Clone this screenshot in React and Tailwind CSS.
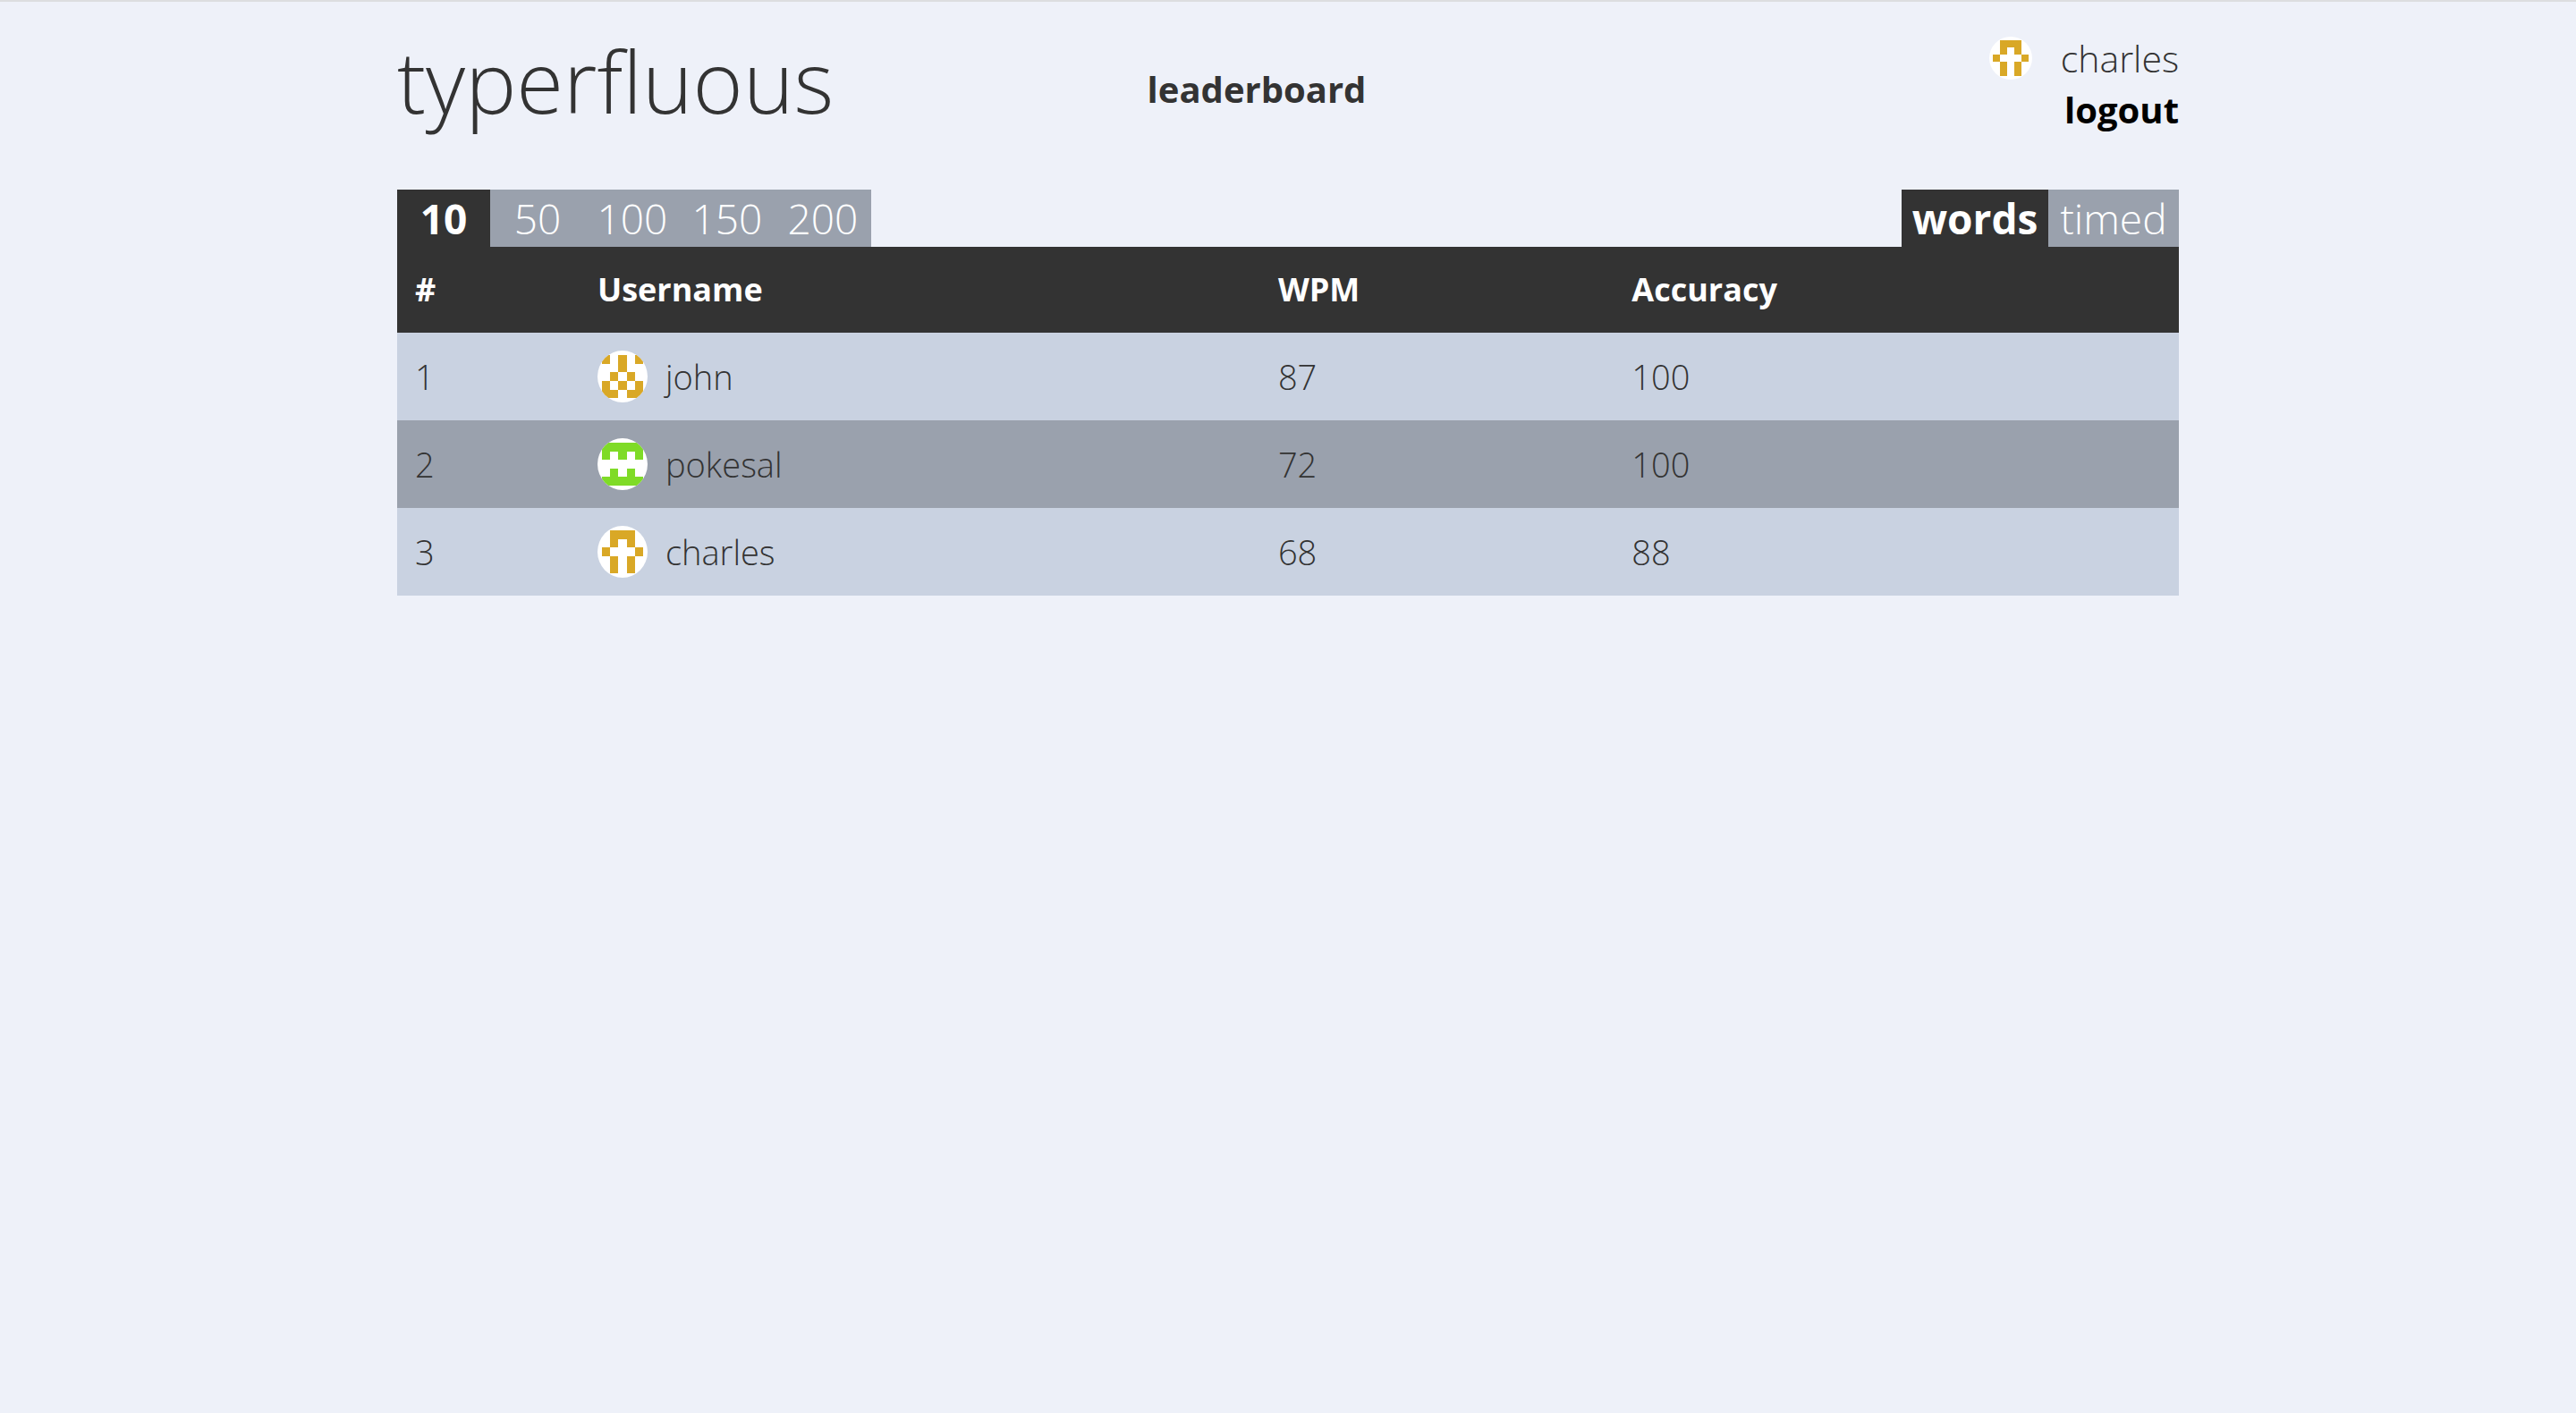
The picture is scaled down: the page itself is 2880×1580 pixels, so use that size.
const GOLD = "#d9a826";
const GREEN = "#7fdb27";

const players = [
  { rank: 1, name: "john", wpm: 87, accuracy: 100, color: GOLD, cells: ["10101", "00100", "01010", "10101", "11011"] },
  { rank: 2, name: "pokesal", wpm: 72, accuracy: 100, color: GREEN, cells: ["11111", "10101", "00000", "01010", "11111"] },
  { rank: 3, name: "charles", wpm: 68, accuracy: 88, color: GOLD, cells: ["01110", "01010", "10001", "01010", "01010"] },
];

function Identicon({ player, className }) {
  return (
    <svg
      viewBox="-5 -5 60 60"
      preserveAspectRatio="none"
      shapeRendering="crispEdges"
      aria-hidden="true"
      className={`shrink-0 rounded-[50%] bg-white ${className}`}
    >
      {player.cells.flatMap((row, y) =>
        [...row].map((cell, x) =>
          cell === "1" ? (
            <rect key={`${x}-${y}`} x={x * 10} y={y * 10} width="10" height="10" fill={player.color} />
          ) : null
        )
      )}
    </svg>
  );
}

function Tab({ active, className, children }) {
  return (
    <button
      type="button"
      aria-pressed={!!active}
      className={`h-16 text-[46px] leading-[64px] text-white ${
        active ? "bg-[#333333] font-bold" : "bg-[#9aa1ad] font-light"
      } ${className}`}
    >
      {children}
    </button>
  );
}

export default function App() {
  const me = players[2];
  return (
    <div className="min-h-screen border-t-2 border-[#dcdde0] bg-[#eef1f9] font-['Open_Sans',sans-serif] text-[#333333] [font-variant-ligatures:none]">
      <div className="mx-auto max-w-[1992px]">
        <header className="grid h-[210px] grid-cols-3 items-start">
          <h1 className="pt-6 text-[96px] leading-[128px] font-light">
            <a href="#home">typerfluous</a>
          </h1>
          <nav className="pt-[68px] pr-[70px] text-center text-[40px] leading-[60px] font-bold">
            <a href="#leaderboard">leaderboard</a>
          </nav>
          <div className="flex flex-col items-end pt-[34px] text-[40px] leading-[58px]">
            <a href="#profile" className="flex items-center gap-8 text-[41px] font-light">
              <Identicon player={me} className="size-12" />
              charles
            </a>
            <button type="button" className="font-bold text-black">
              logout
            </button>
          </div>
        </header>

        <div className="flex justify-between">
          <div className="flex">
            <Tab active className="w-[104px]">10</Tab>
            <Tab className="w-[106px]">50</Tab>
            <Tab className="w-[106px]">100</Tab>
            <Tab className="w-[106px]">150</Tab>
            <Tab className="w-[108px]">200</Tab>
          </div>
          <div className="flex">
            <Tab active className="w-[164px]">words</Tab>
            <Tab className="w-[146px]">timed</Tab>
          </div>
        </div>

        <table className="w-full table-fixed text-left text-[38px] leading-[58px]">
          <colgroup>
            <col className="w-[10.24%]" />
            <col className="w-[38.2%]" />
            <col className="w-[19.85%]" />
            <col />
          </colgroup>
          <thead className="bg-[#333333] text-[36px] text-white">
            <tr className="h-24">
              <th scope="col" className="px-5 font-bold">#</th>
              <th scope="col" className="px-5 font-bold">Username</th>
              <th scope="col" className="px-5 font-bold">WPM</th>
              <th scope="col" className="px-5 font-bold">Accuracy</th>
            </tr>
          </thead>
          <tbody className="font-light">
            {players.map((p) => (
              <tr key={p.rank} className="bg-[#c9d2e1] even:bg-[#9aa1ad]">
                <td className="p-5">{p.rank}</td>
                <td className="p-5">
                  <div className="flex items-center gap-5">
                    <Identicon player={p} className="h-[58px] w-14" />
                    {p.name}
                  </div>
                </td>
                <td className="p-5">{p.wpm}</td>
                <td className="p-5">{p.accuracy}</td>
              </tr>
            ))}
          </tbody>
        </table>
      </div>
    </div>
  );
}
